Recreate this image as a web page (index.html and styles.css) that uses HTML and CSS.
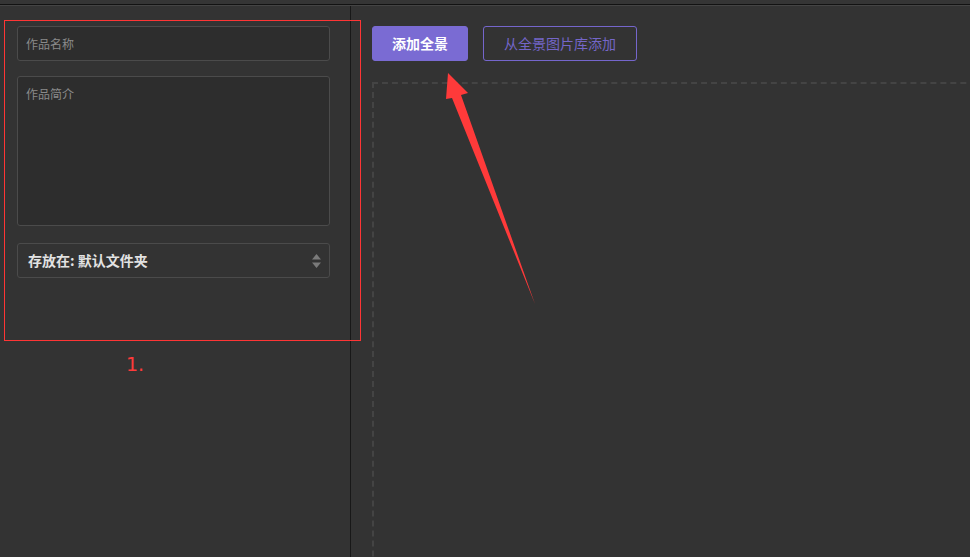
FILE: index.html
```html
<!DOCTYPE html>
<html lang="zh-CN">
<head>
<meta charset="utf-8">
<title>作品</title>
<link rel="stylesheet" href="styles.css">
</head>
<body>
<div class="topbar"></div>
<div class="main">
  <aside class="side">
    <div class="field">作品名称</div>
    <div class="field area">作品简介</div>
    <div class="field select">
      <span>存放在: 默认文件夹</span>
      <svg class="caret" width="9" height="14" viewBox="0 0 9 14"><path d="M4.5 0L9 5.5H0Z M0 8.5H9L4.5 14Z" fill="#7a7a7a"/></svg>
    </div>
  </aside>
  <section class="content">
    <div class="actions">
      <button class="btn primary">添加全景</button>
      <button class="btn outline">从全景图片库添加</button>
    </div>
    <div class="dropzone"></div>
  </section>
</div>
<div class="note-box"></div>
<div class="note-num">1.</div>
<svg class="arrow" width="970" height="557" viewBox="0 0 970 557">
  <polygon points="448,73 468,93 461,95 535,304 452,98 446,99" fill="#ff3a3a"/>
</svg>
</body>
</html>
```
FILE: styles.css
```css
html, body {
  margin: 0;
  padding: 0;
  width: 970px;
  height: 557px;
  overflow: hidden;
  background: #333333;
  font-family: "Noto Sans CJK SC", "Noto Sans", sans-serif;
}
body { position: relative; }
.topbar {
  height: 4px;
  background: #353535;
  border-bottom: 1px solid #121212;
}
.main {
  display: flex;
  height: 551px;
  border-top: 1px solid #444444;
}
.side {
  width: 351px;
  flex: none;
  box-sizing: border-box;
  padding: 20px 0 0 17px;
  border-right: 1px solid #181818;
  background: #333333;
  display: flex;
  flex-direction: column;
}
.field {
  width: 313px;
  height: 35px;
  box-sizing: border-box;
  border: 1px solid #4b4b4b;
  border-radius: 3px;
  background: #2d2d2d;
  color: #8a8a8a;
  font-size: 12px;
  line-height: 33px;
  padding-left: 8px;
}
.area {
  margin-top: 15px;
  height: 150px;
  line-height: 16px;
  padding-top: 9px;
}
.select {
  margin-top: 17px;
  background: #333333;
  color: #e2e2e2;
  font-weight: bold;
  font-size: 14px;
  padding-left: 10px;
  padding-right: 8px;
  display: flex;
  align-items: center;
  justify-content: space-between;
}
.content {
  flex: 1;
  min-width: 0;
  padding: 20px 0 0 21px;
  background: #333333;
  overflow: hidden;
}
.actions {
  display: flex;
  gap: 15px;
}
.btn {
  height: 35px;
  box-sizing: border-box;
  border-radius: 3px;
  font-family: "Noto Sans CJK SC", sans-serif;
  font-size: 14px;
  padding: 0;
  line-height: 33px;
}
.primary {
  width: 96px;
  background: #7a6bd3;
  border: 1px solid #7a6bd3;
  color: #ffffff;
  font-weight: bold;
}
.outline {
  width: 154px;
  background: transparent;
  border: 1px solid #7566cc;
  color: #7466c8;
}
.dropzone {
  margin-top: 21px;
  width: 700px;
  height: 600px;
  border: 2px dashed #444444;
}
.note-box {
  position: absolute;
  left: 4px;
  top: 20px;
  width: 355px;
  height: 319px;
  border: 1px solid #ff3535;
}
.note-num {
  position: absolute;
  left: 126px;
  top: 350px;
  color: #ff3a3a;
  font-family: "DejaVu Sans", sans-serif;
  font-size: 19px;
  line-height: 28px;
}
.arrow {
  position: absolute;
  left: 0;
  top: 0;
  pointer-events: none;
}
```
